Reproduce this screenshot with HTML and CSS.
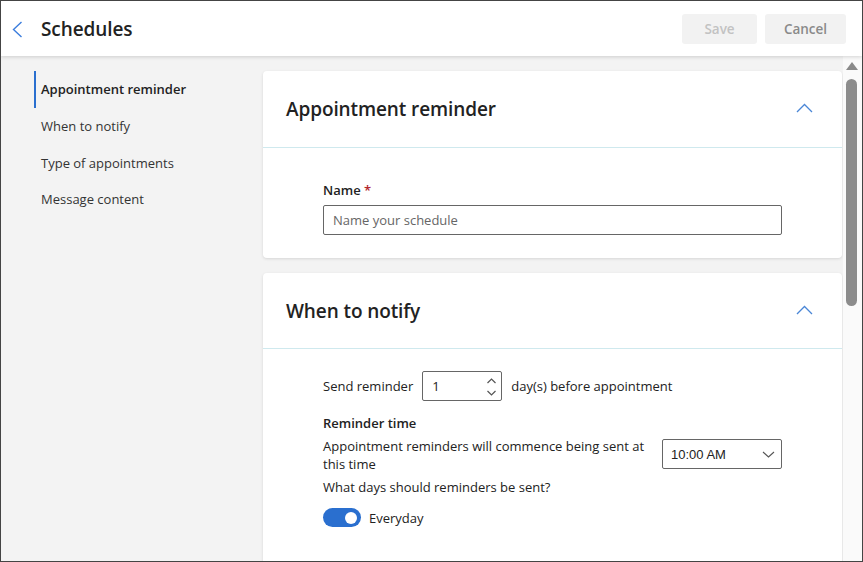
FILE: index.html
```html
<!DOCTYPE html>
<html lang="en">
<head>
<meta charset="utf-8">
<title>Schedules</title>
<link rel="stylesheet" href="styles.css">
</head>
<body>
<div class="frame">
  <header class="header">
    <button class="back" aria-label="Back">
      <svg width="12" height="17" viewBox="0 0 12 17"><path d="M10.5 1 L2.5 8.5 L10.5 16" fill="none" stroke="#3b7ddd" stroke-width="1.4"/></svg>
    </button>
    <h1 class="title">Schedules</h1>
    <div class="actions">
      <button class="btn btn-save" disabled>Save</button>
      <button class="btn btn-cancel">Cancel</button>
    </div>
  </header>
  <div class="body">
    <nav class="side">
      <a class="nav-item active">Appointment reminder</a>
      <a class="nav-item">When to notify</a>
      <a class="nav-item">Type of appointments</a>
      <a class="nav-item">Message content</a>
    </nav>
    <main class="main">
      <section class="card">
        <div class="card-head">
          <h2 class="card-title">Appointment reminder</h2>
          <svg class="chev" width="17" height="10" viewBox="0 0 17 10"><path d="M1 9 L8.5 1.5 L16 9" fill="none" stroke="#4a86d6" stroke-width="1.3"/></svg>
        </div>
        <div class="card-body body-name">
          <label class="label">Name <span class="req">*</span></label>
          <div class="input">Name your schedule</div>
        </div>
      </section>
      <section class="card">
        <div class="card-head">
          <h2 class="card-title">When to notify</h2>
          <svg class="chev" width="17" height="10" viewBox="0 0 17 10"><path d="M1 9 L8.5 1.5 L16 9" fill="none" stroke="#4a86d6" stroke-width="1.3"/></svg>
        </div>
        <div class="card-body body-notify">
          <div class="row-send">
            <span>Send reminder</span>
            <div class="num">
              <span>1</span>
              <svg class="spin" width="11" height="22" viewBox="0 0 11 22"><path d="M1.5 7 L5.5 3 L9.5 7" fill="none" stroke="#555" stroke-width="1.2"/><path d="M1.5 15 L5.5 19 L9.5 15" fill="none" stroke="#555" stroke-width="1.2"/></svg>
            </div>
            <span>day(s) before appointment</span>
          </div>
          <div class="label sub">Reminder time</div>
          <div class="row-time">
            <p class="time-text">Appointment reminders will commence being sent at this time</p>
            <div class="select">
              <span>10:00 AM</span>
              <svg width="13" height="7" viewBox="0 0 13 7"><path d="M1 1 L6.5 6 L12 1" fill="none" stroke="#555" stroke-width="1.1"/></svg>
            </div>
          </div>
          <p class="days">What days should reminders be sent?</p>
          <div class="row-toggle">
            <span class="toggle"><span class="knob"></span></span>
            <span>Everyday</span>
          </div>
        </div>
      </section>
    </main>
    <div class="scrollbar">
      <span class="arrow"></span>
      <span class="thumb"></span>
    </div>
  </div>
</div>
</body>
</html>
```
FILE: styles.css
```css
* { box-sizing: border-box; }
html, body { margin: 0; padding: 0; }
body {
  font-family: "Open Sans", "Noto Sans", sans-serif;
  font-size: 13px;
  color: #222;
  background: #fff;
}
.frame {
  width: 863px;
  height: 562px;
  border: 1px solid #444;
  display: flex;
  flex-direction: column;
  overflow: hidden;
}
.header {
  height: 55px;
  flex: none;
  display: flex;
  align-items: center;
  background: #fff;
  box-shadow: 0 1px 4px rgba(0,0,0,0.16);
  position: relative;
  z-index: 2;
  padding-left: 10px;
}
.back {
  border: 0;
  background: none;
  padding: 0;
  width: 14px;
  height: 17px;
  display: flex;
  margin-top: 2px;
}
.title {
  margin: 0 0 0 16px;
  font-size: 19px;
  font-weight: 600;
  color: #222;
  letter-spacing: -0.1px;
}
.actions {
  margin-left: auto;
  display: flex;
  gap: 8px;
  padding-right: 16px;
}
.btn {
  height: 30px;
  border: 0;
  border-radius: 3px;
  background: #f2f2f2;
  font-family: "Open Sans", sans-serif;
  font-size: 13.5px;
  font-weight: 600;
  padding: 0;
}
.btn-save { width: 75px; color: #c2c2c2; }
.btn-cancel { width: 81px; color: #8a8a8a; }
.body {
  flex: 1;
  display: flex;
  background: #f3f3f3;
  overflow: hidden;
}
.side {
  width: 262px;
  flex: none;
  padding: 15px 0 0 33px;
  display: flex;
  flex-direction: column;
}
.nav-item {
  height: 36.7px;
  display: flex;
  align-items: center;
  padding-left: 5px;
  border-left: 2px solid transparent;
  color: #333;
  font-size: 13px;
}
.nav-item.active {
  border-left-color: #2a6fcf;
  font-weight: 600;
  color: #222;
}
.main {
  flex: 1;
  padding: 15px 1px 0 0;
  display: flex;
  flex-direction: column;
  gap: 15px;
  min-height: 0;
}
.card {
  flex: none;
  background: #fff;
  border-radius: 4px;
  box-shadow: 0 1px 3px rgba(0,0,0,0.12);
}
.card-head {
  height: 77px;
  border-bottom: 1px solid #cfe9ee;
  display: flex;
  align-items: center;
  justify-content: space-between;
  padding: 0 29px 0 23px;
}
.card + .card .card-head { height: 76px; }
.card-title {
  margin: 0;
  font-size: 19px;
  font-weight: 600;
  color: #222;
  letter-spacing: -0.1px;
}
.chev { margin-top: -2px; }
.card-body {
  padding: 0 60px;
}
.body-name { padding-top: 33px; padding-bottom: 23px; }
.label {
  display: block;
  font-weight: 600;
  line-height: 18px;
  color: #222;
}
.req { color: #b3262d; }
.input {
  margin-top: 6px;
  height: 30px;
  border: 1px solid #666;
  border-radius: 2px;
  display: flex;
  align-items: center;
  padding-left: 9px;
  color: #666;
}
.body-notify { padding-top: 22px; padding-bottom: 80px; }
.row-send {
  display: flex;
  align-items: center;
  gap: 9px;
  height: 30px;
}
.num {
  width: 80px;
  height: 30px;
  border: 1px solid #666;
  border-radius: 2px;
  display: flex;
  align-items: center;
  justify-content: space-between;
  padding: 0 4px 0 9px;
}
.spin { margin-top: 1px; }
.sub { margin-top: 13px; }
.row-time {
  margin-top: 5px;
  display: flex;
  align-items: center;
  justify-content: space-between;
}
.time-text {
  margin: 0;
  width: 332px;
  line-height: 18px;
}
.select {
  width: 120px;
  height: 30px;
  border: 1px solid #666;
  border-radius: 2px;
  display: flex;
  align-items: center;
  justify-content: space-between;
  padding: 0 6px 0 8px;
  font-family: "Liberation Sans", Arial, sans-serif;
  font-size: 13px;
  color: #222;
  margin-top: -2px;
}
.days {
  margin: 5px 0 0;
  line-height: 18px;
}
.row-toggle {
  margin-top: 12px;
  display: flex;
  align-items: center;
  gap: 8px;
}
.toggle {
  width: 38px;
  height: 19px;
  border-radius: 10px;
  background: #2a6fcf;
  display: flex;
  align-items: center;
  justify-content: flex-end;
  padding-right: 4px;
}
.knob {
  width: 12px;
  height: 12px;
  border-radius: 50%;
  background: #fff;
}
.scrollbar {
  width: 19px;
  flex: none;
  background: #fafafa;
  display: flex;
  flex-direction: column;
  align-items: flex-start;
  padding: 6px 0 0 3px;
}
.arrow {
  width: 0;
  height: 0;
  border-left: 6px solid transparent;
  border-right: 6px solid transparent;
  border-bottom: 8px solid #8a8a8a;
}
.thumb {
  margin-top: 9px;
  width: 11px;
  height: 227px;
  border-radius: 6px;
  background: #8c8c8c;
}
```
